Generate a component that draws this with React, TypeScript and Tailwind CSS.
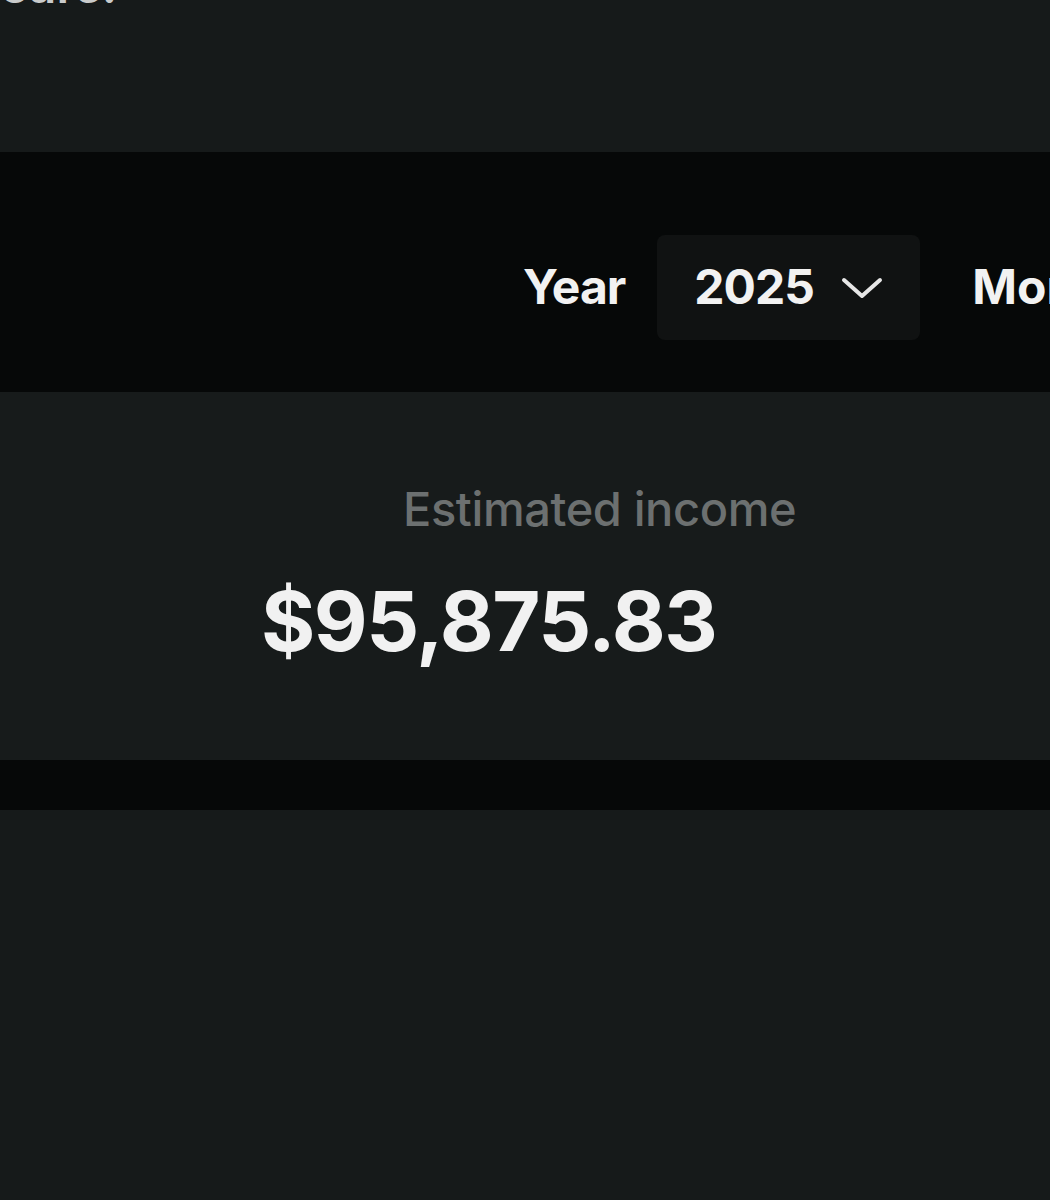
import React from "react";

export default function App() {
  const font = { fontFamily: "Inter, 'Noto Sans', sans-serif" };
  return (
    <div className="w-[1050px] h-[1200px] overflow-hidden bg-[#161a1a] flex flex-col" style={font}>
      {/* top area with clipped heading */}
      <div className="h-[152px] overflow-hidden">
        <div className="mt-[-38px] text-[48px] font-semibold leading-[48px] text-[#c9cbcb] whitespace-nowrap">
          ears.
        </div>
      </div>

      {/* filter bar */}
      <div className="h-[240px] bg-[#060808] flex items-center overflow-hidden whitespace-nowrap">
        <div className="flex items-center pl-[523px] pt-[30px]">
          <span className="text-[48px] font-bold text-[#f2f2f2] tracking-[-1px] leading-none">Year</span>
          <div className="ml-[32px] w-[263px] h-[105px] rounded-[8px] bg-[#101212] flex items-center pl-[37px]">
            <span className="text-[48px] font-bold text-[#f2f2f2] leading-none tracking-[-1px]">2025</span>
            <svg className="ml-[26px] mt-[2px]" width="44" height="24" viewBox="0 0 44 24" fill="none">
              <path d="M4 4 L22 20 L40 4" stroke="#e6e6e6" strokeWidth="4" strokeLinecap="round" strokeLinejoin="round" />
            </svg>
          </div>
          <span className="ml-[52px] text-[48px] font-bold text-[#f2f2f2] leading-none">Month</span>
        </div>
      </div>

      {/* income card */}
      <div className="h-[368px] bg-[#171b1b] flex flex-col">
        <div className="pl-[403px] pt-[93px] text-[47px] font-medium text-[#6c7070] leading-none whitespace-nowrap tracking-[-0.4px]">
          Estimated income
        </div>
        <div className="pl-[261px] mt-[48px] text-[83px] font-bold text-[#f1f1f1] leading-none whitespace-nowrap tracking-[-1.5px]">
          $95,875.83
        </div>
      </div>

      {/* divider strip */}
      <div className="h-[50px] bg-[#060808]" />

      <div className="flex-1 bg-[#161a1a]" />
    </div>
  );
}
